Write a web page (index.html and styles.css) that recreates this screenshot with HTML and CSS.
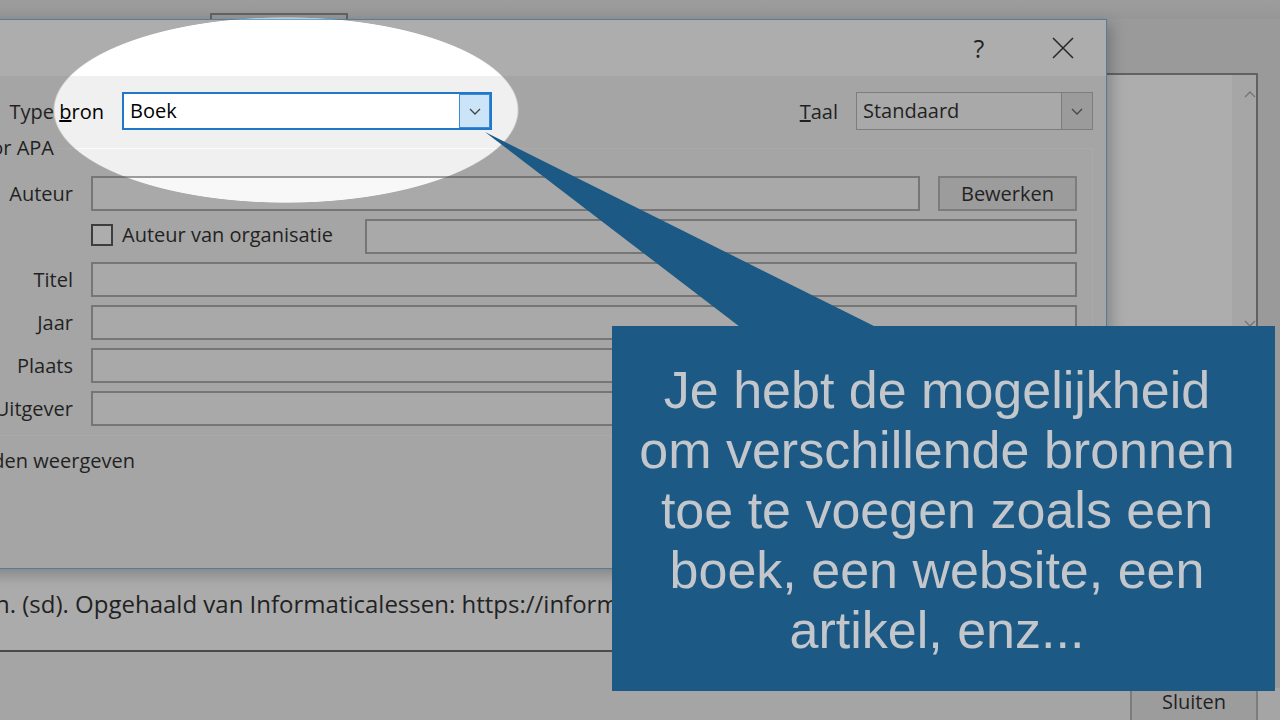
FILE: index.html
```html
<!DOCTYPE html>
<html lang="nl">
<head>
    <meta charset="UTF-8">
    <meta name="viewport" content="width=device-width, initial-scale=1.0">
    <title>Bron maken</title>
    <link rel="stylesheet" href="styles.css">
</head>
<body>
<div class="screen">

    <!-- Window behind the dialog -->
    <div class="topband"><div class="tab"></div></div>

    <div class="main">
        <div class="leftcol">

            <!-- Bron maken dialog -->
            <div class="dialog">
                <div class="titlebar">
                    <span class="tbtn help">?</span>
                    <span class="tbtn close">
                        <svg width="22" height="22" viewBox="0 0 22 22"><path d="M1 1L21 21M21 1L1 21" stroke="#111" stroke-width="1.6" fill="none"/></svg>
                    </span>
                </div>

                <div class="dlgbody">
                    <div class="toprow">
                        <label class="typelabel">Type <u>b</u>ron</label>
                        <div class="combo active">
                            <span class="val">Boek</span>
                            <span class="arrow"><svg width="12" height="7" viewBox="0 0 12 7"><path d="M1 1l5 5 5-5" fill="none" stroke="#444" stroke-width="1.3"/></svg></span>
                        </div>
                        <div class="spacer"></div>
                        <label class="taallabel"><u>T</u>aal</label>
                        <div class="combo taal">
                            <span class="val">Standaard</span>
                            <span class="arrow"><svg width="12" height="7" viewBox="0 0 12 7"><path d="M1 1l5 5 5-5" fill="none" stroke="#444" stroke-width="1.3"/></svg></span>
                        </div>
                    </div>

                    <fieldset class="fields">
                        <legend><span>Velden weergeven voor APA</span></legend>
                        <div class="row">
                            <label class="lbl">Auteur</label>
                            <div class="field"></div>
                            <button class="btn edit">Bewerken</button>
                        </div>
                        <div class="row">
                            <span class="lbl"></span>
                            <span class="checkwrap"><span class="check"></span>Auteur van organisatie</span>
                            <div class="field"></div>
                        </div>
                        <div class="row">
                            <label class="lbl">Titel</label>
                            <div class="field"></div>
                        </div>
                        <div class="row">
                            <label class="lbl">Jaar</label>
                            <div class="field"></div>
                        </div>
                        <div class="row">
                            <label class="lbl">Plaats</label>
                            <div class="field"></div>
                        </div>
                        <div class="row">
                            <label class="lbl">Uitgever</label>
                            <div class="field"></div>
                        </div>
                    </fieldset>

                    <div class="showall"><span class="check"></span>Alle bibliografievelden weergeven</div>
                </div>
            </div>

            <!-- Preview of the citation -->
            <div class="preview">n. (sd). Opgehaald van Informaticalessen: https://informaticalessen.be/</div>
            <div class="bottomarea"></div>
        </div>

        <div class="rightcol">
            <div class="list">
                <div class="listarea"></div>
                <div class="scroll">
                    <svg width="12" height="7" viewBox="0 0 12 7"><path d="M1 6l5-5 5 5" fill="none" stroke="#999" stroke-width="1.4"/></svg>
                    <svg width="12" height="7" viewBox="0 0 12 7"><path d="M1 1l5 5 5-5" fill="none" stroke="#999" stroke-width="1.4"/></svg>
                </div>
            </div>
            <div class="closebar"><button class="btn sluiten">Sluiten</button></div>
        </div>
    </div>

    <!-- Spotlight on the source type -->
    <div class="dim"></div>

    <svg class="pointer" width="1280" height="720" viewBox="0 0 1280 720">
        <polygon points="485,132 744,330 882,330" fill="#1c5a85"/>
    </svg>

    <div class="callout">
        Je hebt de mogelijkheid<br>
        om verschillende bronnen<br>
        toe te voegen zoals een<br>
        boek, een website, een<br>
        artikel, enz...
    </div>
</div>
</body>
</html>
```

FILE: styles.css
```css
/* General */
* {
    box-sizing: border-box;
}

body {
    margin: 0;
    width: 1280px;
    height: 720px;
    overflow: hidden;
    background: #dcdcdc;
    font-family: "Open Sans", "Noto Sans", sans-serif;
    font-size: 20px;
    color: #000;
}

.screen {
    position: relative;
    width: 1280px;
    height: 720px;
    overflow: hidden;
}

/* Window behind */
.topband {
    height: 19px;
    background: linear-gradient(#e2e2e2, #d6d6d6);
    display: flex;
    align-items: flex-end;
}

.tab {
    margin-left: 210px;
    width: 138px;
    height: 6px;
    border: 2px solid #777;
    border-bottom: none;
}

.main {
    display: flex;
    height: 701px;
}

.leftcol {
    width: 1107px;
    display: flex;
    flex-direction: column;
    background: #f0f0f0;
}

/* Dialog */
.dialog {
    flex: none;
    position: relative;
    z-index: 1;
    width: 1367px;
    height: 550px;
    margin-left: -260px;
    background: #f0f0f0;
    border: 1px solid #5aa8e0;
    border-left: none;
    box-shadow: 4px 5px 14px rgba(0, 0, 0, 0.3);
}

.titlebar {
    height: 56px;
    background: #fff;
    display: flex;
    justify-content: flex-end;
}

.tbtn {
    width: 84px;
    display: flex;
    align-items: center;
    justify-content: center;
}

.help {
    font-size: 25px;
}

.close {
    margin-right: 1px;
}

.dlgbody {
    padding: 16px 13px 0 0;
}

.toprow {
    display: flex;
    align-items: center;
    height: 38px;
}

.typelabel {
    width: 364px;
    text-align: right;
    margin-right: 18px;
}

.taallabel {
    margin-right: 18px;
}

.spacer {
    flex: 1;
}

.combo {
    height: 38px;
    display: flex;
    background: #fff;
    border: 1px solid #a8a8a8;
}

.combo .val {
    flex: 1;
    padding-left: 6px;
    line-height: 36px;
}

.combo .arrow {
    width: 31px;
    display: flex;
    align-items: center;
    justify-content: center;
}

.combo.active {
    width: 370px;
    border: 2px solid #1f78c8;
}

.combo.active .val {
    line-height: 34px;
}

.combo.active .arrow {
    background: #cce4f7;
    border: 1px solid #3d8ad6;
}

.combo.taal {
    width: 237px;
    background: #f8f8f8;
}

.combo.taal .arrow {
    background: #dedede;
    border-left: 1px solid #a8a8a8;
}

/* Field group */
.fields {
    margin: 6px 0 0 40px;
    padding: 16px 15px 9px 0;
    border: 1px solid #fafafa;
    min-width: 0;
}

.fields legend {
    width: 276px;
    padding: 0;
    line-height: 24px;
}

.fields legend span {
    display: block;
    padding-right: 3px;
    text-align: right;
    white-space: nowrap;
}

.row {
    display: flex;
    align-items: center;
    height: 35px;
}

.row + .row {
    margin-top: 8px;
}

.lbl {
    width: 292px;
    margin-right: 18px;
    text-align: right;
    white-space: nowrap;
}

.field {
    flex: 1;
    height: 35px;
    background: #f8f8f8;
    border: 2px solid #9c9c9c;
}

.btn {
    font-family: inherit;
    font-size: 20px;
    color: #000;
    background: #e1e1e1;
    border: 2px solid #a6a6a6;
    padding: 0;
}

.edit {
    width: 139px;
    height: 35px;
    margin-left: 18px;
}

.checkwrap {
    width: 274px;
    display: flex;
    align-items: center;
    padding-bottom: 4px;
}

.check {
    width: 22px;
    height: 22px;
    border: 2px solid #333;
    background: #fff;
    margin-right: 9px;
}

.showall {
    width: 395px;
    height: 26px;
    margin-top: 11px;
    display: flex;
    justify-content: flex-end;
    align-items: center;
    white-space: nowrap;
}

/* Citation preview */
.preview {
    flex: none;
    height: 83px;
    padding-top: 18px;
    text-indent: -5px;
    font-size: 24px;
    background: #fbfbfb;
    border-bottom: 2px solid #4b4b4b;
    white-space: nowrap;
    overflow: hidden;
}

.bottomarea {
    flex: 1;
}

/* Source list on the right */
.rightcol {
    flex: 1;
    display: flex;
    flex-direction: column;
}

.list {
    margin-top: 54px;
    width: 151px;
    height: 262px;
    display: flex;
    background: #fff;
    border-top: 2px solid #777;
    border-right: 2px solid #777;
}

.listarea {
    flex: 1;
}

.scroll {
    width: 24px;
    background: #f2f2f2;
    display: flex;
    flex-direction: column;
    justify-content: space-between;
    align-items: flex-end;
    padding: 16px 0 8px;
}

.closebar {
    margin-top: auto;
    height: 32px;
    padding-left: 23px;
    background: #f0f0f0;
}

.sluiten {
    width: 128px;
    height: 36px;
    line-height: 24px;
    padding-bottom: 8px;
}

/* Spotlight overlay */
.dim {
    position: absolute;
    z-index: 2;
    inset: 0;
    background: rgba(73, 73, 73, 0.45);
    -webkit-mask-image: radial-gradient(ellipse 233px 93px at 286px 110px, transparent 99.2%, #000 100%);
    mask-image: radial-gradient(ellipse 233px 93px at 286px 110px, transparent 99.2%, #000 100%);
}

.pointer {
    position: absolute;
    z-index: 3;
    left: 0;
    top: 0;
    pointer-events: none;
}

/* Callout */
.callout {
    position: absolute;
    z-index: 3;
    left: 612px;
    top: 326px;
    width: 663px;
    height: 365px;
    padding: 34px 13px 0 0;
    background: #1c5a85;
    color: #c3c7cc;
    font-family: "Liberation Sans", Arial, sans-serif;
    font-size: 52px;
    line-height: 60px;
    text-align: center;
}
```
